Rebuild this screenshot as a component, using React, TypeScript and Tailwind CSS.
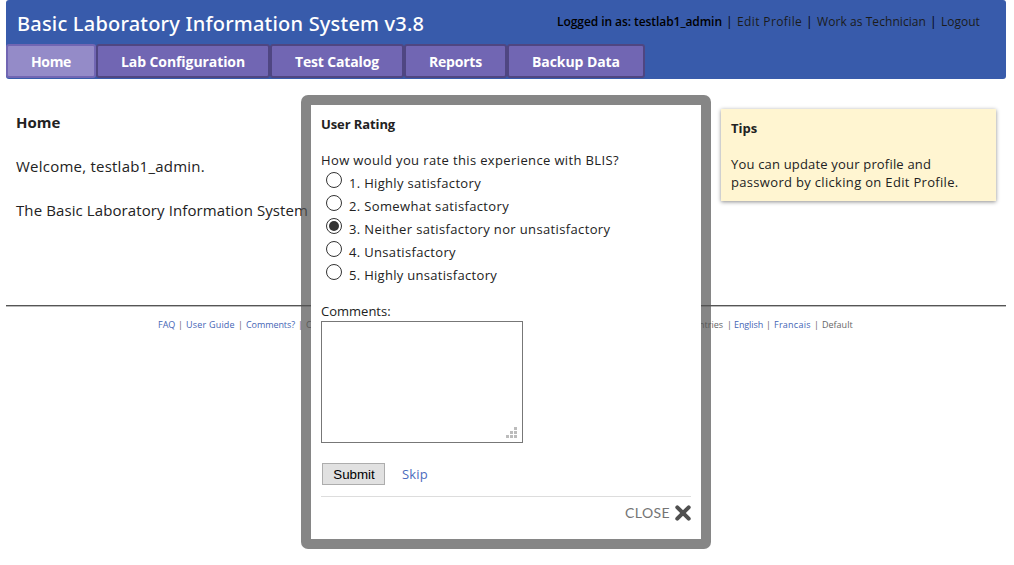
import { useState } from "react";

const tabs = [
  { label: "Home", cls: "w-[90px] border-[#7166b3] bg-[#948bc8] tracking-[-0.35px]" },
  { label: "Lab Configuration", cls: "w-[174px] border-[#4f4682] bg-[#7166b3] tracking-[-0.08px]" },
  { label: "Test Catalog", cls: "w-[134px] border-[#4f4682] bg-[#7166b3] tracking-[-0.15px]" },
  { label: "Reports", cls: "w-[103px] border-[#4f4682] bg-[#7166b3] tracking-[-0.2px]" },
  { label: "Backup Data", cls: "w-[138px] border-[#4f4682] bg-[#7166b3] tracking-[-0.08px]" },
];

const options = [
  { label: "1. Highly satisfactory", cls: "tracking-[0.32px]" },
  { label: "2. Somewhat satisfactory", cls: "tracking-[0.36px]" },
  { label: "3. Neither satisfactory nor unsatisfactory", cls: "tracking-[0.36px]" },
  { label: "4. Unsatisfactory", cls: "tracking-[0.33px]" },
  { label: "5. Highly unsatisfactory", cls: "tracking-[0.3px]" },
];

function Header() {
  return (
    <header className="mx-[6px] flex h-[79px] w-[1000px] flex-col rounded-[3px] bg-[#385bab]">
      <div className="flex h-[44px] pt-[10px] pl-[11px]">
        <h1 className="w-[540px] font-['Noto_Sans'] text-[20px] leading-[28px] font-medium tracking-[0.2px] text-white">
          Basic Laboratory Information System v3.8
        </h1>
        <div className="flex pt-[2px] text-[12px] leading-[20px] text-black">
          <span className="w-[169px] font-semibold tracking-[-0.065px]">Logged in as: testlab1_admin</span>
          <span className="w-[11px]">|</span>
          <a className="w-[69px] tracking-[0.38px] text-[#1b1b1b]">Edit Profile</a>
          <span className="w-[11px]">|</span>
          <a className="w-[113px] tracking-[0.07px] text-[#1b1b1b]">Work as Technician</a>
          <span className="w-[11px]">|</span>
          <a className="text-[#1b1b1b]">Logout</a>
        </div>
      </div>
      <nav className="flex h-[34px]">
        {tabs.map((t) => (
          <a
            key={t.label}
            className={`flex shrink-0 items-center justify-center rounded-[3px] border-2 pt-px text-[14px] font-bold text-white ${t.cls}`}
          >
            {t.label}
          </a>
        ))}
      </nav>
    </header>
  );
}

function Footer() {
  return (
    <footer className="mx-[6px] mt-[85px] w-[1000px] border-t border-[#555]">
      <div className="flex h-[38px] border-t border-[#bbb] pt-[10px] pl-[152px] text-[9px] leading-[16px] text-[#666]">
        <a className="w-[19px] text-[#4465b5]">FAQ</a>
        <span className="w-[9px] pl-px">|</span>
        <a className="w-[51px] tracking-[0.2px] text-[#4465b5]">User Guide</a>
        <span className="w-[9px] pl-px">|</span>
        <a className="w-[51px] tracking-[-0.08px] text-[#4465b5]">Comments?</a>
        <span className="w-[9px] pl-px">|</span>
        <span className="w-[373px]">C</span>
        <span className="w-[44px] text-right">Countries</span>
        <span className="w-[11px] pl-[4px]">|</span>
        <a className="w-[31px] tracking-[-0.1px] text-[#4465b5]">English</a>
        <span className="w-[9px] pl-px">|</span>
        <a className="w-[39px] tracking-[0.25px] text-[#4465b5]">Francais</a>
        <span className="w-[9px] pl-px">|</span>
        <span>Default</span>
      </div>
    </footer>
  );
}

function RatingDialog() {
  const [rating, setRating] = useState(2);
  return (
    <div className="absolute top-[95px] left-[301px] h-[454px] w-[410px] rounded-[7px] bg-[rgba(82,82,82,0.7)] p-[10px]">
      <div className="flex h-full flex-col bg-white px-[10px] pt-[10px] text-[13px] text-[#222]">
        <h2 className="h-[18px] leading-[18px] font-bold tracking-[-0.1px]">User Rating</h2>
        <p className="mt-[18px] h-[18px] leading-[18px] tracking-[0.37px]">How would you rate this experience with BLIS?</p>
        <div className="flex flex-col pt-[3px]">
          {options.map((o, i) => (
            <label key={o.label} className="flex h-[23px] pl-[5px]" onClick={() => setRating(i)}>
              <span className="flex size-[16px] items-center justify-center rounded-full border border-[#333]">
                {rating === i && <span className="size-[10px] rounded-full bg-[#333]" />}
              </span>
              <span className={`pt-[2px] pl-[7px] leading-[18px] ${o.cls}`}>{o.label}</span>
            </label>
          ))}
        </div>
        <p className="mt-[15px] h-[18px] leading-[18px]">Comments:</p>
        <div className="mt-px flex h-[122px] w-[202px] items-end justify-end border border-[#777] px-[5px] pb-[4px]">
          <svg width="11" height="11" viewBox="0 0 11 11" fill="#bcbcbc" shapeRendering="crispEdges">
            <path d="M8 0h3v3h-3zM4 4h3v3h-3zM8 4h3v3h-3zM0 8h3v3h-3zM4 8h3v3h-3zM8 8h3v3h-3z" />
          </svg>
        </div>
        <div className="mt-[20px] flex h-[22px] items-center pl-px">
          <button className="h-[22px] w-[63px] border border-[#adadad] bg-[#e1e1e1] pt-px pl-px font-['Liberation_Sans'] text-[13.33px] leading-[19px] text-black">
            Submit
          </button>
          <a className="pl-[17px] leading-[22px] tracking-[0.2px] text-[#4b6cbd]">Skip</a>
        </div>
        <div className="mt-[11px] flex justify-end border-t border-[#ddd] pt-[8px]">
          <span className="pr-[5px] font-['Lato'] text-[14px] leading-[15px] tracking-[0.4px] text-[#747474]">CLOSE</span>
          <svg width="16" height="16" viewBox="0 0 16 16" fill="none" stroke="#505050" strokeWidth="4" strokeLinecap="round" strokeLinejoin="round">
            <path d="M2.3 2.3L13.7 13.7M13.7 2.3L2.3 13.7" />
          </svg>
        </div>
      </div>
    </div>
  );
}

export default function App() {
  return (
    <div className="relative h-[565px] w-[1014px] overflow-hidden bg-white font-['Open_Sans',sans-serif] whitespace-nowrap text-[#222]">
      <Header />
      <div className="flex pt-[30px] pl-[16px]">
        <main className="w-[705px] pt-[3px] text-[15px] leading-[20px]">
          <h2 className="font-bold">Home</h2>
          <p className="mt-[24px] tracking-[0.23px]">Welcome, testlab1_admin.</p>
          <p className="mt-[24px] tracking-[0.1px]">The Basic Laboratory Information System</p>
        </main>
        <aside className="h-[92px] w-[275px] bg-[#fff5d1] px-[10px] pt-[10px] text-[13px] leading-[18px] shadow-[0_1px_4px_rgba(0,0,0,0.45)]">
          <h3 className="font-bold">Tips</h3>
          <p className="mt-[18px] tracking-[0.18px]">You can update your profile and</p>
          <p className="tracking-[0.32px]">password by clicking on Edit Profile.</p>
        </aside>
      </div>
      <Footer />
      <RatingDialog />
    </div>
  );
}
